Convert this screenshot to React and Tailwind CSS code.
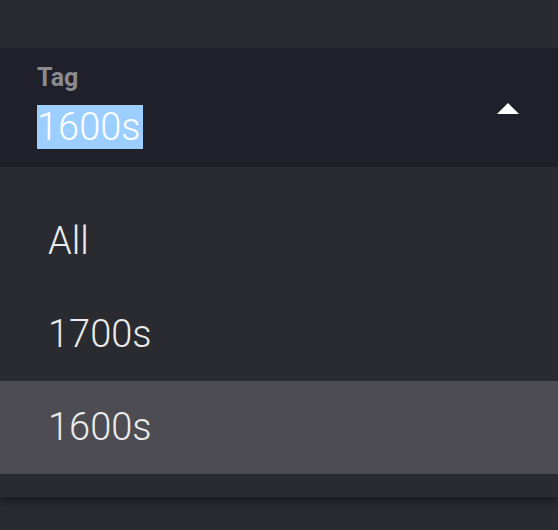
import React from "react";

const options = ["All", "1700s", "1600s"];

const App = () => {
  const selected = "1600s";

  return (
    <div className="w-[558px] h-[530px] bg-[#2a2b31] pt-[48px] font-['Roboto',sans-serif] overflow-hidden">
      {/* select field */}
      <div className="h-[119px] bg-[#1f2029] pl-[37px] pr-[39px] flex items-center justify-between">
        <div className="flex flex-col">
          <span className="text-[25px] leading-[24px] font-bold text-[#8b8b8f]">Tag</span>
          <span className="mt-[15px] text-[38px] leading-[45px] font-light text-white">
            <span className="bg-[#9ccfff] pr-[2px]">{selected}</span>
          </span>
        </div>
        <svg width="22" height="11" viewBox="0 0 22 11" className="mt-[2px]">
          <path d="M11 0 L22 11 L0 11 Z" fill="#ffffff" />
        </svg>
      </div>

      {/* dropdown menu */}
      <div className="bg-[#2a2b30] pt-[28px] pb-[23px] shadow-[0_5px_8px_rgba(0,0,0,0.4)]">
        {options.map((opt) => (
          <div
            key={opt}
            className={`h-[93px] flex items-center pl-[48px] text-[38px] leading-[45px] font-light text-[#ececec] ${
              opt === selected ? "bg-[#4c4c52]" : ""
            }`}
          >
            {opt}
          </div>
        ))}
      </div>
    </div>
  );
};

export default App;
